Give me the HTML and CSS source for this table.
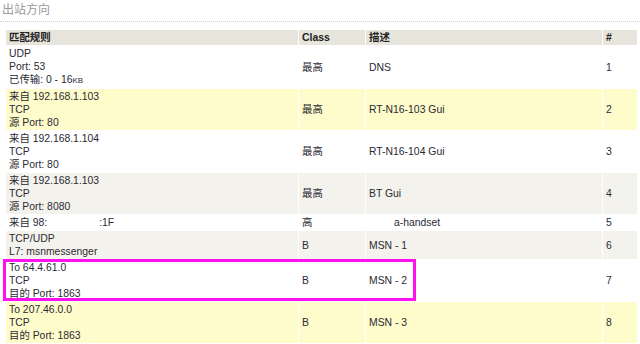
FILE: index.html
```html
<!DOCTYPE html>
<html>
<head>
<meta charset="utf-8">
<link rel="stylesheet" href="styles.css">
</head>
<body>
<div class="page">
  <h2 class="title">出站方向</h2>
  <div class="wrap">
    <table class="rules">
      <colgroup>
        <col class="c1"><col class="c2"><col class="c3"><col class="c4">
      </colgroup>
      <thead>
        <tr><th>匹配规则</th><th>Class</th><th>描述</th><th>#</th></tr>
      </thead>
      <tbody>
        <tr class="white"><td>UDP<br>Port: 53<br>已传输: 0 - 16<span class="sc">KB</span></td><td>最高</td><td>DNS</td><td>1</td></tr>
        <tr class="yellow"><td>来自 192.168.1.103<br>TCP<br>源 Port: 80</td><td>最高</td><td>RT-N16-103 Gui</td><td>2</td></tr>
        <tr class="white"><td>来自 192.168.1.104<br>TCP<br>源 Port: 80</td><td>最高</td><td>RT-N16-104 Gui</td><td>3</td></tr>
        <tr class="beige"><td>来自 192.168.1.103<br>TCP<br>源 Port: 8080</td><td>最高</td><td>BT Gui</td><td>4</td></tr>
        <tr class="white"><td>来自 98:<span class="gap1"></span>:1F</td><td>高</td><td><span class="gap2"></span>a-handset</td><td>5</td></tr>
        <tr class="beige"><td>TCP/UDP<br>L7: msnmessenger</td><td>B</td><td>MSN - 1</td><td>6</td></tr>
        <tr class="white"><td>To 64.4.61.0<br>TCP<br>目的 Port: 1863</td><td>B</td><td>MSN - 2</td><td>7</td></tr>
        <tr class="yellow"><td>To 207.46.0.0<br>TCP<br>目的 Port: 1863</td><td>B</td><td>MSN - 3</td><td>8</td></tr>
      </tbody>
    </table>
    <div class="highlight"></div>
  </div>
</div>
</body>
</html>
```
FILE: styles.css
```css
html, body {
  margin: 0;
  padding: 0;
  background: #fff;
}
body {
  font-family: "Liberation Sans", Arial, "Noto Sans CJK SC", sans-serif;
  font-size: 10.4px;
  color: #2a2a33;
}
.page {
  width: 640px;
  height: 344px;
  overflow: hidden;
}
.title {
  margin: 0;
  padding: 3px 0 3px 2px;
  font-size: 12px;
  font-weight: normal;
  color: #9a9a9a;
  line-height: 15px;
  border-bottom: 1px dotted #c8d4dc;
}
.wrap {
  position: relative;
  padding: 7px 0 0 5px;
}
.rules {
  border-collapse: separate;
  border-spacing: 1px;
  width: 631px;
  table-layout: fixed;
}
.c1 { width: 292px; }
.c2 { width: 66px; }
.c3 { width: 236px; }
.c4 { width: 34px; }
.rules th {
  background: #e7e4dc;
  text-align: left;
  font-weight: bold;
  color: #222;
  padding: 1px 3px;
  height: 13px;
  line-height: 13px;
}
.rules td {
  padding: 1px 3px;
  line-height: 13px;
  vertical-align: middle;
}
.white td { background: #fff; }
.yellow td { background: #fffccb; }
.beige td { background: #f4f2ec; }
.sc { font-size: 8px; }
.gap1 {
  display: inline-block;
  width: 52px;
}
.gap2 {
  display: inline-block;
  width: 25px;
}
.highlight {
  position: absolute;
  left: 3px;
  top: 237px;
  width: 407px;
  height: 36px;
  border: 3px solid #ff10ee;
}
```
